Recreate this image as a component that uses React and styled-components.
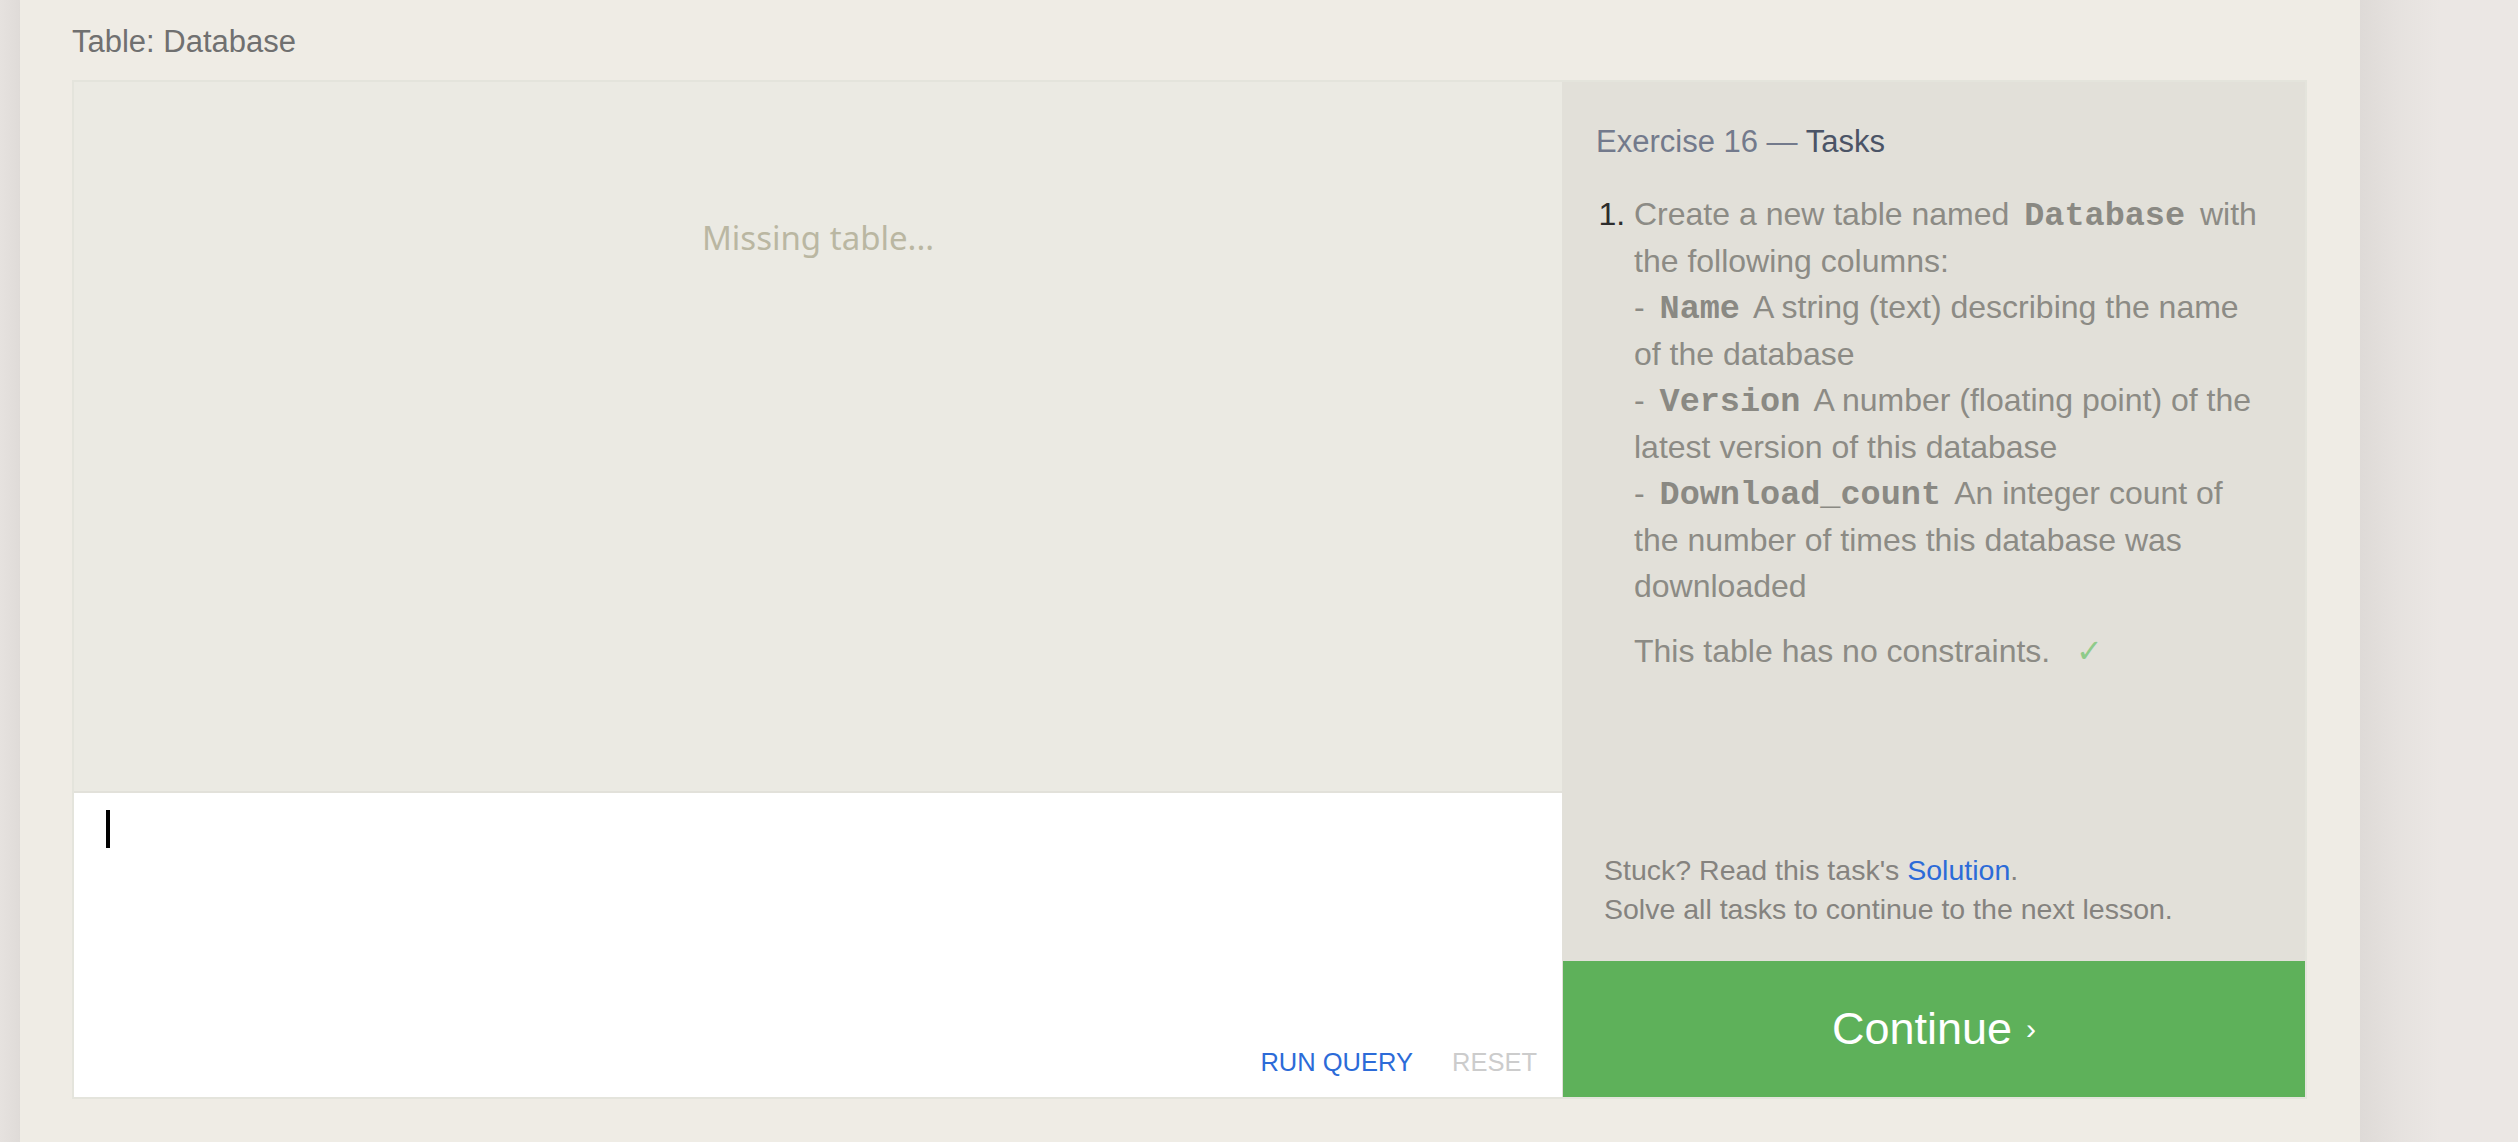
import React from "react";
import styled, { createGlobalStyle } from "styled-components";

const GlobalStyle = createGlobalStyle`
  html, body { margin: 0; padding: 0; }
  body {
    background: #ebe7e4;
    font-family: "Liberation Sans", Arial, sans-serif;
    width: 2518px;
    height: 1142px;
    overflow: hidden;
  }
`;

const Page = styled.div`
  display: flex;
  height: 1142px;
`;

const Gutter = styled.div`
  width: 20px;
  flex: none;
  background: linear-gradient(to right, #e6e2df, #dfdbd8);
`;

const Sheet = styled.main`
  width: 2340px;
  flex: none;
  background: #efece5;
  box-shadow: 6px 0 10px rgba(0, 0, 0, 0.05);
  padding: 0 53px 0 52px;
  box-sizing: border-box;
  display: flex;
  flex-direction: column;
`;

const TableLabel = styled.div`
  font-size: 31px;
  line-height: 40px;
  color: #707070;
  padding-top: 22px;
  height: 80px;
  box-sizing: border-box;
`;

const Workspace = styled.section`
  display: flex;
  height: 1019px;
  border: 2px solid #e4e4dc;
  box-sizing: border-box;
`;

const LeftCol = styled.div`
  width: 1488px;
  flex: none;
  display: flex;
  flex-direction: column;
`;

const Results = styled.div`
  flex: 1;
  background: #ebeae3;
  border-bottom: 2px solid #e2e1da;
  display: flex;
  justify-content: center;
  padding-top: 136px;
  box-sizing: border-box;
`;

const Missing = styled.div`
  font-family: "Noto Sans", "Open Sans", sans-serif;
  font-size: 33px;
  line-height: 40px;
  color: #bab7a2;
  height: 40px;
`;

const Editor = styled.div`
  height: 304px;
  background: #ffffff;
  flex: none;
  display: flex;
  flex-direction: column;
  justify-content: space-between;
  padding: 17px 0 0 32px;
  box-sizing: border-box;
`;

const Caret = styled.span`
  display: block;
  width: 4px;
  height: 38px;
  background: #000;
`;

const EditorActions = styled.div`
  display: flex;
  justify-content: flex-end;
  align-items: center;
  gap: 39px;
  padding: 0 25px 17px 0;
`;

const ActionLink = styled.span`
  font-size: 25.5px;
  line-height: 36px;
  color: ${(p) => (p.$muted ? "#cccccc" : "#2c6bd8")};
`;

const TaskPanel = styled.aside`
  flex: 1;
  background: #e2e0d9;
  display: flex;
  flex-direction: column;
`;

const TaskBody = styled.div`
  flex: 1;
  padding: 38px 40px 0 34px;
`;

const TaskTitle = styled.h2`
  margin: 0;
  font-weight: 400;
  font-size: 31px;
  line-height: 44px;
  color: #737a8c;
  span { color: #4b5466; }
`;

const TaskList = styled.ol`
  margin: 27px 0 0 0;
  padding: 0 0 0 38px;
  font-size: 32px;
  line-height: 46.5px;
  color: #8c8b85;
  li::marker { color: #2d2d2d; }
`;

const Code = styled.code`
  font-family: "Liberation Mono", "Courier New", monospace;
  font-weight: 700;
  font-size: 33.5px;
  line-height: 1;
  color: #8a8983;
  margin: 0 6px;
`;

const Note = styled.p`
  margin: 18px 0 0 0;
  font-size: 32px;
  line-height: 46.5px;
  color: #8c8b85;
`;

const Check = styled.span`
  color: #8fcb8a;
  margin-left: 26px;
`;

const Help = styled.div`
  padding: 0 0 32px 42px;
  font-size: 28.5px;
  line-height: 39px;
  color: #85837f;
  a { color: #2c6bd8; text-decoration: none; }
`;

const ContinueButton = styled.button`
  height: 136px;
  flex: none;
  margin: 0 0 0 1px;
  border: none;
  background: #5eb15a;
  color: #ffffff;
  font-family: "Liberation Sans", Arial, sans-serif;
  font-size: 45px;
  display: flex;
  align-items: center;
  justify-content: center;
  gap: 14px;
  padding: 0;
  span { font-size: 30px; }
`;

const Rest = styled.div`
  flex: 1;
  background: linear-gradient(to right, #dedad7, #e6e2df 40px, #ebe7e4 80px);
`;

export default function App() {
  return (
    <>
      <GlobalStyle />
      <Page>
        <Gutter />
        <Sheet>
          <TableLabel>Table: Database</TableLabel>
          <Workspace>
            <LeftCol>
              <Results>
                <Missing>Missing table...</Missing>
              </Results>
              <Editor>
                <Caret />
                <EditorActions>
                  <ActionLink>RUN QUERY</ActionLink>
                  <ActionLink $muted>RESET</ActionLink>
                </EditorActions>
              </Editor>
            </LeftCol>
            <TaskPanel>
              <TaskBody>
                <TaskTitle>
                  Exercise 16 — <span>Tasks</span>
                </TaskTitle>
                <TaskList>
                  <li>
                    Create a new table named <Code>Database</Code> with the following columns:
                    <br />
                    - <Code>Name</Code> A string (text) describing the name of the database
                    <br />
                    - <Code>Version</Code> A number (floating point) of the latest version of this database
                    <br />
                    - <Code>Download_count</Code> An integer count of the number of times this database was downloaded
                    <Note>
                      This table has no constraints.
                      <Check>✓</Check>
                    </Note>
                  </li>
                </TaskList>
              </TaskBody>
              <Help>
                Stuck? Read this task's <a href="#">Solution</a>.
                <br />
                Solve all tasks to continue to the next lesson.
              </Help>
              <ContinueButton>
                Continue <span>›</span>
              </ContinueButton>
            </TaskPanel>
          </Workspace>
        </Sheet>
        <Rest />
      </Page>
    </>
  );
}
